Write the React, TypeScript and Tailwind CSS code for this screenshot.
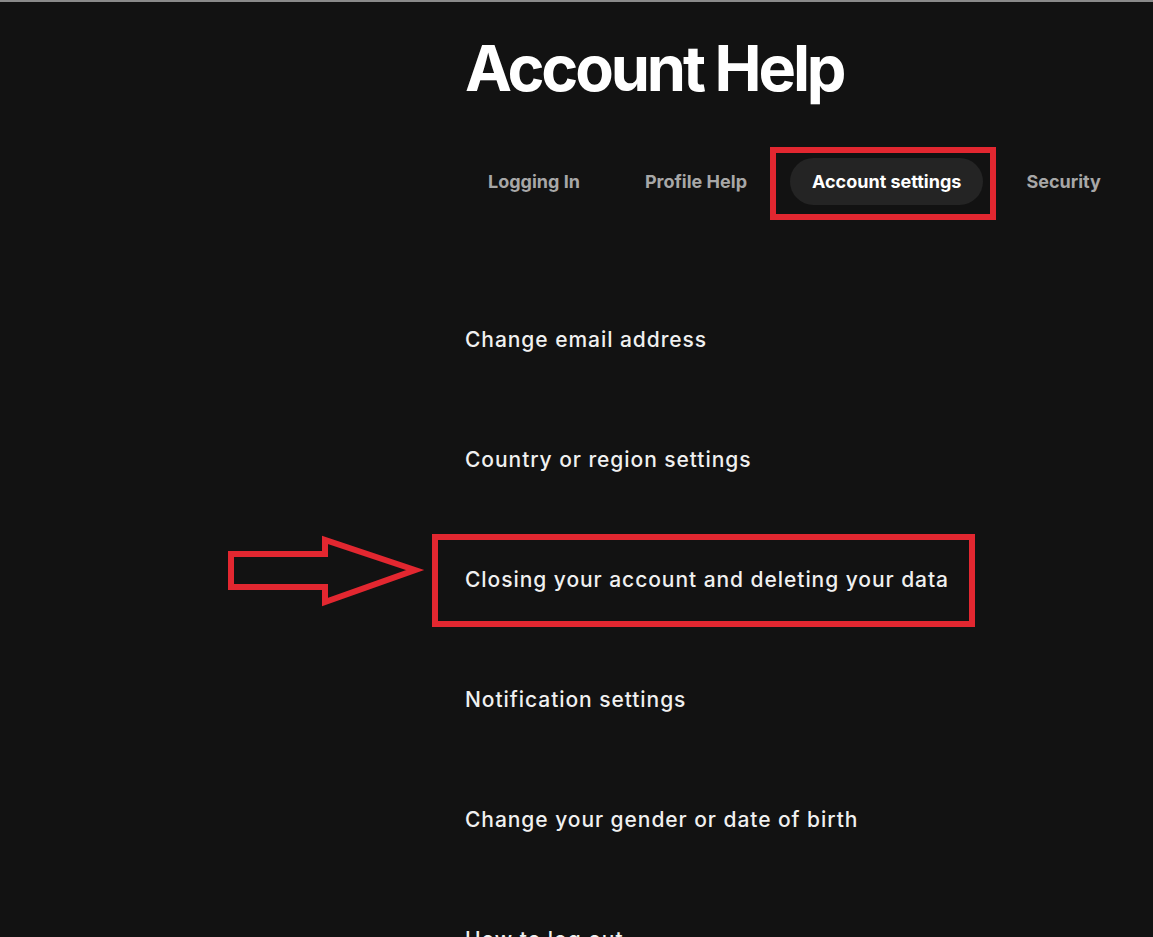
import React from "react";

const tabs = ["Logging In", "Profile Help", "Account settings", "Security"];

const articles = [
    "Change email address",
    "Country or region settings",
    "Closing your account and deleting your data",
    "Notification settings",
    "Change your gender or date of birth",
    "How to log out",
];

// red outline arrow pointing at the highlighted article
const Arrow = () => (
    <svg width="200" height="76" viewBox="0 0 200 76" className="absolute left-[-240px] top-[14px]">
        <polygon
            points="6,20 100,20 100,6 190,36 100,68 100,53 6,53"
            fill="none"
            stroke="#e22730"
            strokeWidth="6"
            strokeLinejoin="miter"
        />
    </svg>
);

const App = () => {
    const active = "Account settings";

    return (
        <div className="h-[937px] overflow-hidden bg-[#121212] border-t-2 border-[#8a8a8a] font-['Inter',sans-serif]">
            <div className="flex flex-col pl-[465px] pt-[26px]">
                <h1 className="text-[63px] leading-[80px] font-bold tracking-[-0.05em] text-white">
                    Account Help
                </h1>

                {/* Category tabs */}
                <div className="flex gap-[21px] mt-[50px] ml-px">
                    {tabs.map((tab) => {
                        const isActive = tab === active;
                        return (
                            <div key={tab} className="relative">
                                <div
                                    className={
                                        isActive
                                            ? "h-[47px] px-[22px] flex items-center rounded-full bg-[#242424] text-white text-[18px] font-bold"
                                            : "h-[47px] px-[22px] flex items-center text-[#a7a7a7] text-[18px] font-bold"
                                    }
                                >
                                    {tab}
                                </div>
                                {isActive && (
                                    <div className="absolute -left-[20px] -right-[13px] -top-[11px] -bottom-[15px] border-[6px] border-[#e22730]" />
                                )}
                            </div>
                        );
                    })}
                </div>

                {/* Articles */}
                <ul className="flex flex-col mt-[75px]">
                    {articles.map((item, index) => (
                        <li key={index} className="relative h-[120px] flex items-center">
                            <span className="text-[21px] font-medium tracking-[0.045em] text-[#f0f0f0]">{item}</span>
                            {index === 2 && (
                                <>
                                    <div className="absolute left-[-33px] top-[14px] bottom-[13px] w-[543px] border-[6px] border-[#e22730]" />
                                    <Arrow />
                                </>
                            )}
                        </li>
                    ))}
                </ul>
            </div>
        </div>
    );
};

export default App;
